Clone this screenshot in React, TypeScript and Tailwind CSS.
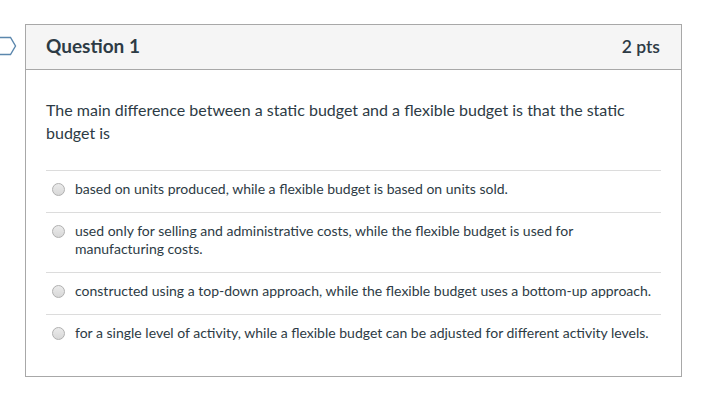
import React from "react";

const answers = [
  "based on units produced, while a flexible budget is based on units sold.",
  "used only for selling and administrative costs, while the flexible budget is used for manufacturing costs.",
  "constructed using a top-down approach, while the flexible budget uses a bottom-up approach.",
  "for a single level of activity, while a flexible budget can be adjusted for different activity levels.",
];

function Radio() {
  return (
    <span className="mt-[3px] w-[13px] h-[13px] shrink-0 rounded-full border border-[#b0b0b0] bg-gradient-to-b from-[#ebebeb] to-[#d8d8d8]" />
  );
}

export default function App() {
  return (
    <div
      className="w-[707px] h-[406px] bg-white relative text-[#2d3b45]"
      style={{ fontFamily: "Lato, 'Liberation Sans', sans-serif" }}
    >
      <svg className="absolute left-0 top-[36px]" width="18" height="20" viewBox="0 0 18 20">
        <path d="M-2 1.5 H10.5 L15.5 10 L10.5 18.5 H-2" fill="none" stroke="#5b87ad" strokeWidth="1.4" />
      </svg>
      <div className="pt-[24px] pl-[25px]">
        <div className="w-[657px] h-[353px] border border-[#a8a8a8] flex flex-col">
          <div className="h-[45px] shrink-0 bg-[#f5f5f5] border-b border-[#a8a8a8] flex items-center justify-between px-5">
            <span className="text-[19px] font-bold leading-none pb-[3px]">Question 1</span>
            <span className="text-[17.5px] font-semibold leading-none text-[#2d3b45] pr-[1px] pb-[1px]">2 pts</span>
          </div>
          <div className="px-5 pt-[28px]">
            <p className="text-[16px] leading-[23px] pr-[20px]">
              The main difference between a static budget and a flexible budget is that the static budget is
            </p>
            <div className="mt-[26px] border-t border-[#dcdcdc]">
              {answers.map((a, i) => (
                <div
                  key={i}
                  className={`flex items-start gap-[10px] pl-[6px] pt-[9px] pb-[14px] ${i < answers.length - 1 ? "border-b border-[#dcdcdc]" : ""}`}
                >
                  <Radio />
                  <span className="text-[14px] leading-[18px]">{a}</span>
                </div>
              ))}
            </div>
          </div>
        </div>
      </div>
    </div>
  );
}
